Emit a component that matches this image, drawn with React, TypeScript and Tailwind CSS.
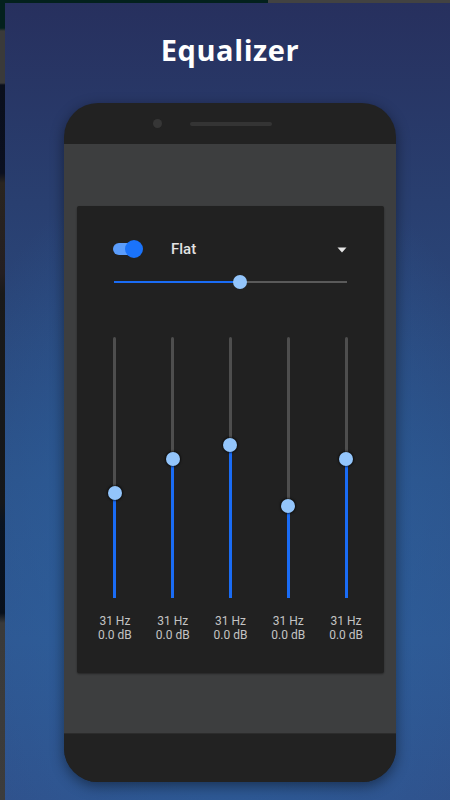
import React from 'react';

const bands = [
  { hz: '31 Hz', db: '0.0 dB', pos: 156 },
  { hz: '31 Hz', db: '0.0 dB', pos: 122 },
  { hz: '31 Hz', db: '0.0 dB', pos: 108 },
  { hz: '31 Hz', db: '0.0 dB', pos: 169 },
  { hz: '31 Hz', db: '0.0 dB', pos: 122 },
];

const TRACK_H = 261;

function VerticalSlider({ pos }: { pos: number }) {
  return (
    <div className="relative flex justify-center" style={{ height: TRACK_H }}>
      {/* upper (inactive) part and lower (active) part */}
      <div className="flex flex-col w-[3px] h-full">
        <div className="bg-[#4e4e4e] rounded-t-full" style={{ height: pos }} />
        <div className="bg-[#1a6cf5] flex-1" />
      </div>
      <div
        className="absolute left-1/2 -translate-x-1/2 -translate-y-1/2 w-[14px] h-[14px] rounded-full bg-[#93c5fb] shadow-[0_0_2px_1px_rgba(0,0,0,0.6)]"
        style={{ top: pos }}
      />
    </div>
  );
}

export default function App() {
  return (
    <div className="w-[450px] h-[800px] overflow-hidden flex flex-col bg-[#3c3c3c] font-['Roboto',sans-serif]">
      {/* strip of the previous screen peeking at the top */}
      <div className="flex h-[3px] shrink-0">
        <div className="w-[268px] bg-[#03211d]" />
        <div className="flex-1 bg-[#424242]" />
      </div>

      <div className="flex flex-1">
        {/* strip of the previous screen peeking at the left */}
        <div className="w-[5px] shrink-0 bg-[linear-gradient(to_bottom,#03211d_0px,#03211d_25px,#3a3a3a_28px,#3a3a3a_80px,#0a0f1c_82px,#0b1020_170px,#2a2520_180px,#241f22_270px,#1a1a1a_290px,#15171a_500px,#0a1422_520px,#08101c_610px,#3a3a3a_620px,#3c3c3c_800px)]" />

        {/* blue promo panel */}
        <div className="flex-1 flex flex-col bg-[radial-gradient(ellipse_70%_55%_at_50%_72%,#2c62a0_0%,rgba(44,98,160,0)_100%),linear-gradient(to_bottom,#27305e_0%,#293f70_25%,#2c5188_60%,#2f5690_80%,#30508a_100%)]">
          <h1 className="mt-[27px] ml-[150px] w-[150px] text-center h-[40px] leading-[40px] text-white text-[29px] font-bold tracking-[0.6px] font-['Open_Sans',sans-serif]">
            Equalizer
          </h1>

          {/* phone */}
          <div className="mt-[33px] ml-[59px] w-[332px] h-[679px] rounded-[34px] bg-[#222222] overflow-hidden flex flex-col shadow-[0_4px_14px_rgba(0,0,0,0.45)]">
            {/* top bezel */}
            <div className="h-[41px] shrink-0 flex items-center">
              <div className="ml-[89px] w-[9px] h-[9px] rounded-full bg-[#363636]" />
              <div className="ml-[28px] w-[82px] h-[4px] rounded-full bg-[#343434]" />
            </div>

            {/* screen */}
            <div className="h-[589px] shrink-0 bg-[#3d3e3f] pt-[62px] pl-[13px] pr-[12px]">
              <div className="h-[467px] bg-[#212121] rounded-[2px] shadow-[0_1px_2px_rgba(0,0,0,0.4)] flex flex-col">
                {/* toggle + preset */}
                <div className="mt-[31px] h-[24px] flex items-center pl-[36px] pr-[37px]">
                  <div className="relative w-[30px] h-[18px] flex items-center">
                    <div className="w-[24px] h-[12px] rounded-full bg-[#5b9dfc]" />
                    <div className="absolute right-0 top-0 w-[18px] h-[18px] rounded-full bg-[#1a73fb]" />
                  </div>
                  <span className="ml-[28px] text-[15px] text-[#e2e2e2] font-medium">Flat</span>
                  <svg className="ml-auto mt-[2px]" width="10" height="6" viewBox="0 0 10 6">
                    <path d="M0.5 0.5 H9.5 L5 5.5 Z" fill="#e6e6e6" />
                  </svg>
                </div>

                {/* master slider */}
                <div className="mt-[14px] ml-[37px] mr-[37px] relative h-[14px] flex items-center">
                  <div className="w-[126px] h-[2px] bg-[#1a6cf5]" />
                  <div className="flex-1 h-[2px] bg-[#5a5a5a]" />
                  <div className="absolute left-[119px] top-0 w-[14px] h-[14px] rounded-full bg-[#93c5fb]" />
                </div>

                {/* band sliders */}
                <div className="mt-[48px] px-[9px] grid grid-cols-5">
                  {bands.map((b, i) => (
                    <div key={i} className="flex flex-col items-center">
                      <VerticalSlider pos={b.pos} />
                      <div className="mt-[16px] text-[12px] leading-[14px] text-[#c4c4c4] text-center">
                        <div>{b.hz}</div>
                        <div>{b.db}</div>
                      </div>
                    </div>
                  ))}
                </div>
              </div>
            </div>

            {/* bottom bezel */}
            <div className="flex-1 bg-[#222222] border-t border-[#2c2c2c]" />
          </div>
        </div>
      </div>
    </div>
  );
}
